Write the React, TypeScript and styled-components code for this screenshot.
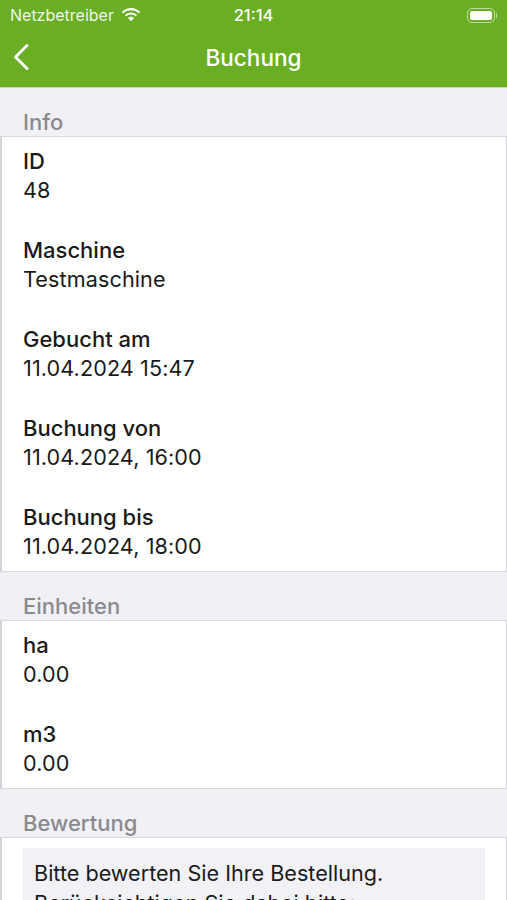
import React from 'react';
import styled, { createGlobalStyle } from 'styled-components';

const GlobalStyle = createGlobalStyle`
  html, body {
    margin: 0;
    padding: 0;
    height: 900px;
    overflow: hidden;
    background: #f0f0f5;
  }
`;

interface Field {
  label: string;
  value: string;
}

const infoFields: Field[] = [
  { label: 'ID', value: '48' },
  { label: 'Maschine', value: 'Testmaschine' },
  { label: 'Gebucht am', value: '11.04.2024 15:47' },
  { label: 'Buchung von', value: '11.04.2024, 16:00' },
  { label: 'Buchung bis', value: '11.04.2024, 18:00' },
];

const unitFields: Field[] = [
  { label: 'ha', value: '0.00' },
  { label: 'm3', value: '0.00' },
];

const App: React.FC = () => (
  <Page>
    <GlobalStyle />
    <Header>
      <StatusBar>
        <Carrier>
          Netzbetreiber
          <svg width="20" height="14" viewBox="0 0 20 14" fill="#fff">
            <path d="M10 2.2c3 0 5.8 1.2 7.8 3.2l1.3-1.4C16.700 1.600 13.500 0 10 0S3.300 1.600.9 4l1.300 1.400c2-2 4.800-3.200 7.800-3.200z" />
            <path d="M10 6.500c1.800 0 3.400.7 4.700 1.900l1.300-1.400C14.400 5.400 12.300 4.400 10 4.400S5.600 5.400 4 7l1.300 1.400c1.300-1.200 2.900-1.900 4.700-1.900z" />
            <path d="M10 8.700c-1.200 0-2.200.5-3 1.200l3 3.300 3-3.300c-.8-.7-1.800-1.200-3-1.200z" />
          </svg>
        </Carrier>
        <Clock>21:14</Clock>
        <Battery>
          <BatteryBody>
            <BatteryLevel />
          </BatteryBody>
          <BatteryCap />
        </Battery>
      </StatusBar>
      <NavBar>
        <BackButton>
          <svg width="18" height="28" viewBox="0 0 18 28" fill="none">
            <path d="M15 2.500 3.500 14 15 25.500" stroke="#fff" strokeWidth="3" strokeLinecap="round" strokeLinejoin="round" />
          </svg>
        </BackButton>
        <Title>Buchung</Title>
      </NavBar>
    </Header>
    <SectionTitle>Info</SectionTitle>
    <Section>
      {infoFields.map((field) => (
        <FieldBlock key={field.label}>
          <FieldLabel>{field.label}</FieldLabel>
          <FieldValue>{field.value}</FieldValue>
        </FieldBlock>
      ))}
    </Section>
    <SectionTitle>Einheiten</SectionTitle>
    <Section>
      {unitFields.map((field) => (
        <FieldBlock key={field.label}>
          <FieldLabel>{field.label}</FieldLabel>
          <FieldValue>{field.value}</FieldValue>
        </FieldBlock>
      ))}
    </Section>
    <SectionTitle>Bewertung</SectionTitle>
    <RatingSection>
      <RatingBox>
        Bitte bewerten Sie Ihre Bestellung.
        <br />
        Berücksichtigen Sie dabei bitte:
      </RatingBox>
    </RatingSection>
  </Page>
);

const Page = styled.div`
  width: 507px;
  height: 900px;
  overflow: hidden;
  background: #f0f0f5;
  color: #1a1a1a;
  font-family: 'Inter', 'Liberation Sans', sans-serif;
`;

const Header = styled.header`
  background: #69ae23;
  height: 87px;
  color: #fff;
  border-bottom: 1px solid #c4d9ac;
`;

const StatusBar = styled.div`
  height: 30px;
  display: grid;
  grid-template-columns: 1fr auto 1fr;
  align-items: center;
  padding: 0 10px;
  font-size: 16px;
`;

const Carrier = styled.div`
  display: flex;
  align-items: center;
  gap: 7px;
  color: rgba(255, 255, 255, 0.92);
`;

const Clock = styled.div`
  font-size: 16.500px;
  font-weight: 500;
`;

const Battery = styled.div`
  justify-self: end;
  display: flex;
  align-items: center;
  gap: 1px;
`;

const BatteryBody = styled.div`
  width: 28px;
  height: 15px;
  border: 1px solid rgba(255, 255, 255, 0.55);
  border-radius: 5px;
  padding: 2px;
  box-sizing: border-box;
`;

const BatteryLevel = styled.div`
  height: 100%;
  background: #fff;
  border-radius: 2px;
`;

const BatteryCap = styled.div`
  width: 1px;
  height: 5px;
  background: rgba(255, 255, 255, 0.55);
`;

const NavBar = styled.div`
  position: relative;
  height: 57px;
  display: flex;
  align-items: center;
  justify-content: center;
  padding-bottom: 3px;
  box-sizing: border-box;
`;

const BackButton = styled.div`
  position: absolute;
  left: 12px;
  top: 13px;
  display: flex;
`;

const Title = styled.h1`
  margin: 0;
  font-size: 22.500px;
  font-weight: 500;
`;

const SectionTitle = styled.div`
  height: 48px;
  box-sizing: border-box;
  padding: 21px 23px 0;
  font-size: 22px;
  font-weight: 500;
  color: #8a8a8e;
`;

const Section = styled.section`
  background: #fff;
  border: 1px solid #d8d8dc;
  border-left: 2px solid #d4d4d8;
  display: flex;
  flex-direction: column;
  gap: 31px;
  padding: 10px 22px 10px 21px;
`;

const FieldBlock = styled.div`
  display: flex;
  flex-direction: column;
`;

const FieldLabel = styled.div`
  font-size: 22px;
  font-weight: 550;
  line-height: 28px;
`;

const FieldValue = styled.div`
  font-size: 21.600px;
  letter-spacing: 0.1px;
  line-height: 30px;
`;

const RatingSection = styled.section`
  background: #fff;
  border: 1px solid #d8d8dc;
  border-left: 2px solid #d4d4d8;
  border-bottom: none;
  padding: 10px 21px;
`;

const RatingBox = styled.div`
  background: #f2f2f6;
  padding: 10px 11px;
  font-size: 21.600px;
  line-height: 30px;
`;

export default App;
